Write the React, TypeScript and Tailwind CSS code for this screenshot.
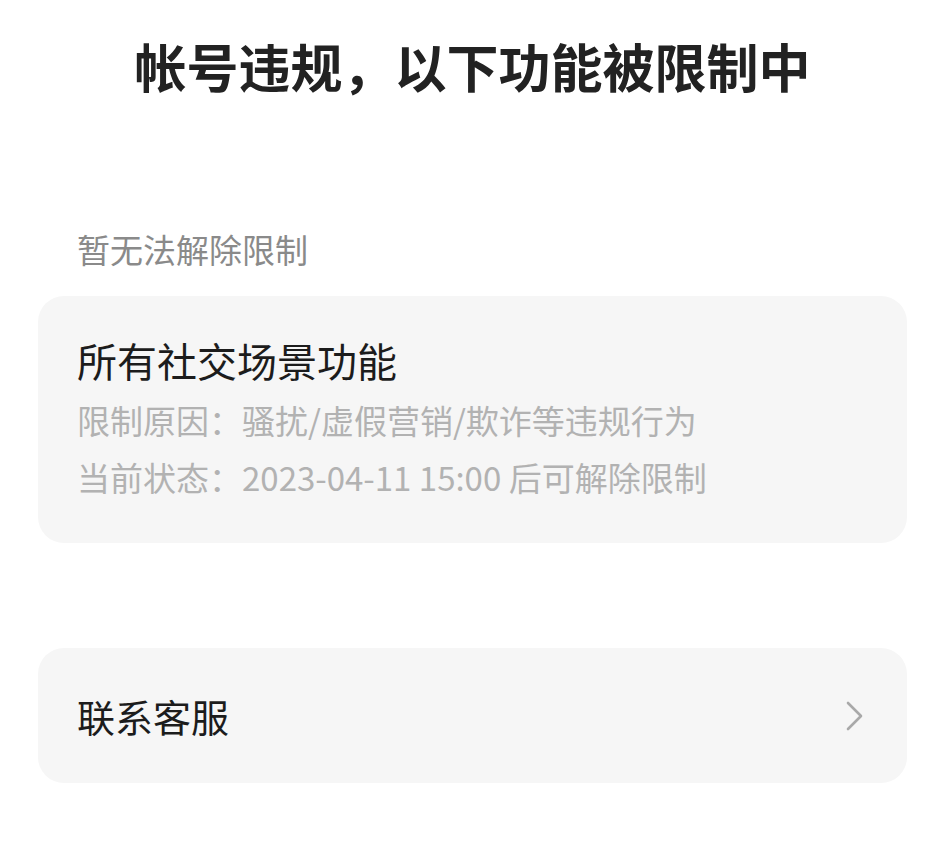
import React from 'react';

const font = { fontFamily: '"Noto Sans CJK SC", "Noto Sans", sans-serif' };

const RestrictionCard: React.FC<{ title: string; reason: string; status: string }> = ({
  title,
  reason,
  status,
}) => (
  <div className="rounded-[26px] bg-[#f6f6f6] px-[39px] pt-[38px] pb-[37px]">
    <div className="text-[40px] leading-[52px] text-[#1c1c1c]">{title}</div>
    <div className="mt-[6px] text-[33px] leading-[57px] text-[#b2b2b2]">限制原因：{reason}</div>
    <div className="text-[33px] leading-[57px] text-[#b2b2b2]">当前状态：{status}</div>
  </div>
);

// thin grey chevron at the end of a row
const Chevron = () => (
  <svg width="20" height="32" viewBox="0 0 20 32" fill="none">
    <path d="M3 3l13 13L3 29" stroke="#a9a9a9" strokeWidth="2.6" strokeLinecap="round" strokeLinejoin="round" />
  </svg>
);

export default function App() {
  return (
    <div className="min-h-[856px] w-[945px] bg-white px-[38px]" style={font}>
      <h1 className="pt-[31px] text-center text-[52px] font-bold leading-[70px] text-[#222]">
        帐号违规，以下功能被限制中
      </h1>

      <div className="mt-[126px] pl-[39px] text-[33px] leading-[44px] text-[#8a8a8a]">暂无法解除限制</div>

      <div className="mt-[25px]">
        <RestrictionCard
          title="所有社交场景功能"
          reason="骚扰/虚假营销/欺诈等违规行为"
          status="2023-04-11 15:00 后可解除限制"
        />
      </div>

      <div className="mt-[105px] flex h-[135px] items-center justify-between rounded-[26px] bg-[#f6f6f6] pl-[39px] pr-[42px]">
        <span className="text-[38px] text-[#1c1c1c]">联系客服</span>
        <Chevron />
      </div>
    </div>
  );
}
